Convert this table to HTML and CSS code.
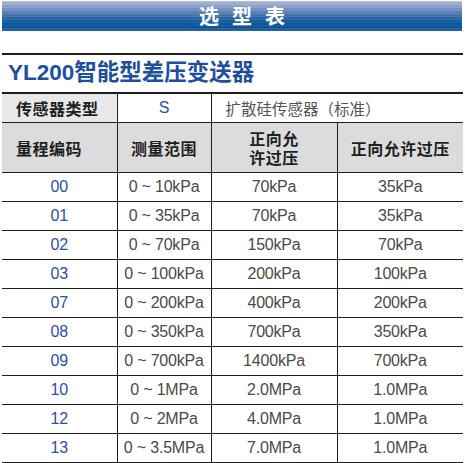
FILE: index.html
```html
<!DOCTYPE html>
<html lang="zh-CN">
<head>
<meta charset="utf-8">
<link rel="stylesheet" href="styles.css">
</head>
<body>
<div class="page">
  <div class="banner"><span class="banner-text">选型表</span></div>
  <div class="rule"></div>
  <h1 class="title">YL200智能型差压变送器</h1>
  <table class="spec">
    <colgroup>
      <col class="c1"><col class="c2"><col class="c3"><col class="c4">
    </colgroup>
    <tr class="type-row">
      <th class="left">传感器类型</th>
      <td class="code">S</td>
      <td class="desc" colspan="2">扩散硅传感器（标准）</td>
    </tr>
    <tr class="head-row">
      <th class="left">量程编码</th>
      <th>测量范围</th>
      <th class="two-line">正向允<br>许过压</th>
      <th>正向允许过压</th>
    </tr>
    <tr><td class="code">00</td><td>0 ~ 10kPa</td><td>70kPa</td><td>35kPa</td></tr>
    <tr><td class="code">01</td><td>0 ~ 35kPa</td><td>70kPa</td><td>35kPa</td></tr>
    <tr><td class="code">02</td><td>0 ~ 70kPa</td><td>150kPa</td><td>70kPa</td></tr>
    <tr><td class="code">03</td><td>0 ~ 100kPa</td><td>200kPa</td><td>100kPa</td></tr>
    <tr><td class="code">07</td><td>0 ~ 200kPa</td><td>400kPa</td><td>200kPa</td></tr>
    <tr><td class="code">08</td><td>0 ~ 350kPa</td><td>700kPa</td><td>350kPa</td></tr>
    <tr><td class="code">09</td><td>0 ~ 700kPa</td><td>1400kPa</td><td>700kPa</td></tr>
    <tr><td class="code">10</td><td>0 ~ 1MPa</td><td>2.0MPa</td><td>1.0MPa</td></tr>
    <tr><td class="code">12</td><td>0 ~ 2MPa</td><td>4.0MPa</td><td>1.0MPa</td></tr>
    <tr><td class="code">13</td><td>0 ~ 3.5MPa</td><td>7.0MPa</td><td>1.0MPa</td></tr>
  </table>
</div>
</body>
</html>
```

FILE: styles.css
```css
html, body {
  margin: 0;
  padding: 0;
  background: #ffffff;
}

.page {
  width: 465px;
  height: 463px;
  overflow: hidden;
  padding-left: 2px;
  padding-top: 1px;
  box-sizing: border-box;
  font-family: "Liberation Sans", "Noto Sans CJK SC", sans-serif;
}

.banner {
  width: 460px;
  height: 30px;
  display: flex;
  align-items: center;
  justify-content: center;
  background:
    repeating-linear-gradient(to bottom, rgba(255,255,255,0.06) 0px, rgba(255,255,255,0.06) 1px, rgba(0,0,0,0.04) 1px, rgba(0,0,0,0.04) 3px),
    linear-gradient(to bottom, #b3bfdc 0%, #8fa3cf 18%, #5f82bd 38%, #2a68aa 58%, #0c5a9d 75%, #0b5899 88%, #2f6aab 100%);
}

.banner-text {
  color: #ffffff;
  font-family: "Noto Sans CJK SC", sans-serif;
  font-weight: 700;
  font-size: 20px;
  letter-spacing: 13px;
  margin-left: 33px;
  line-height: 30px;
}

.rule {
  width: 461px;
  height: 2px;
  background: #1e1e1e;
  margin-top: 22px;
}

.title {
  margin: 0;
  height: 37px;
  line-height: 36px;
  padding-left: 6px;
  font-family: "Liberation Sans", "Noto Sans CJK SC", sans-serif;
  font-size: 22.5px;
  font-weight: 700;
  color: #1d4f9f;
}

.spec {
  border-collapse: collapse;
  table-layout: fixed;
  width: 461px;
  border-top: 2px solid #1e1e1e;
}

.c1 { width: 115px; }
.c2 { width: 94px; }
.c3 { width: 126px; }
.c4 { width: 126px; }

.spec td, .spec th {
  border-bottom: 1px solid #1e1e1e;
  border-left: 1px solid #1e1e1e;
  padding: 0;
  text-align: center;
  height: 28px;
  font-size: 16px;
  color: #4a4a4a;
  font-weight: 400;
  letter-spacing: -0.2px;
}

.spec tr > :first-child {
  border-left: none;
}

.spec th {
  font-family: "Noto Sans CJK SC", sans-serif;
  font-weight: 700;
  color: #1f1f1f;
  line-height: 20px;
  letter-spacing: 0.5px;
}

.spec th.two-line {
  line-height: 19px;
  padding-top: 1px;
}

.spec th.left {
  text-align: left;
  padding-left: 14px;
}

.type-row th {
  background: #e8e8ea;
}

.type-row td {
  background: #ffffff;
}

.head-row th {
  background: #dcdcdc;
  height: 48px;
}

.spec td.code {
  color: #2b4fa6;
}

.spec td.desc {
  text-align: left;
  padding-left: 14px;
  font-family: "Noto Sans CJK SC", sans-serif;
  font-size: 15.5px;
  color: #555555;
  letter-spacing: 0;
}
```
